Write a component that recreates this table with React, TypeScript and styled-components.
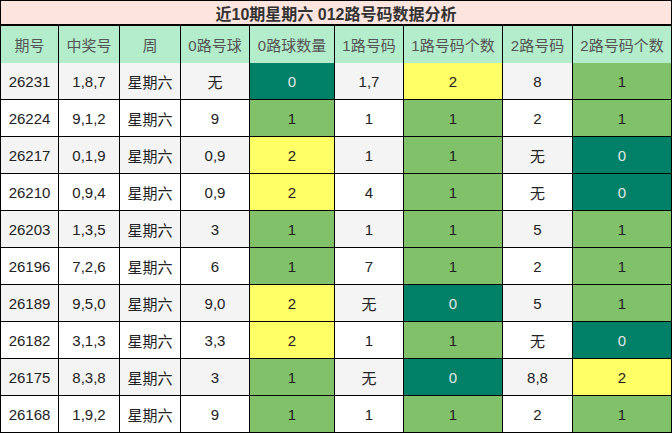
import React from "react";
import styled, { createGlobalStyle } from "styled-components";

const Global = createGlobalStyle`
  html, body { margin: 0; padding: 0; background: #fff; }
  body { font-family: "Liberation Sans", "Noto Sans CJK SC", sans-serif; }
`;

const Frame = styled.div`
  width: 672px;
  box-sizing: border-box;
  background: #000;
  padding: 1px;
  display: flex;
  flex-direction: column;
  gap: 2px;
`;

const Title = styled.div`
  height: 23px;
  background: #fde5df;
  color: #333;
  font-weight: bold;
  font-size: 16px;
  display: flex;
  align-items: center;
  justify-content: center;
  font-family: "Liberation Sans", "Noto Sans CJK SC", sans-serif;
`;

const Grid = styled.div`
  display: grid;
  grid-template-columns: 57px 60px 60px 68px 84px 68px 98px 69px 98px;
  grid-auto-rows: 36px;
  gap: 1px;
`;

const HeadCell = styled.div`
  height: 37px;
  background: #b3edcb;
  color: #555;
  font-size: 15px;
  display: flex;
  align-items: center;
  justify-content: center;
  white-space: nowrap;
`;

type Tone = "plain" | "dark" | "green" | "yellow";

const toneBg: Record<Tone, string> = {
  plain: "transparent",
  dark: "#008066",
  green: "#80c169",
  yellow: "#ffff66",
};

const Cell = styled.div<{ $tone: Tone; $alt: boolean }>`
  background: ${(p) => (p.$tone === "plain" ? (p.$alt ? "#f4f4f4" : "#ffffff") : toneBg[p.$tone])};
  color: ${(p) => (p.$tone === "dark" ? "#e6e6e6" : "#222")};
  font-size: 15px;
  display: flex;
  align-items: center;
  justify-content: center;
  white-space: nowrap;
`;

const headers = ["期号", "中奖号", "周", "0路号球", "0路球数量", "1路号码", "1路号码个数", "2路号码", "2路号码个数"];

const rows: [string, string, string, string, number, string, number, string, number][] = [
  ["26231", "1,8,7", "星期六", "无", 0, "1,7", 2, "8", 1],
  ["26224", "9,1,2", "星期六", "9", 1, "1", 1, "2", 1],
  ["26217", "0,1,9", "星期六", "0,9", 2, "1", 1, "无", 0],
  ["26210", "0,9,4", "星期六", "0,9", 2, "4", 1, "无", 0],
  ["26203", "1,3,5", "星期六", "3", 1, "1", 1, "5", 1],
  ["26196", "7,2,6", "星期六", "6", 1, "7", 1, "2", 1],
  ["26189", "9,5,0", "星期六", "9,0", 2, "无", 0, "5", 1],
  ["26182", "3,1,3", "星期六", "3,3", 2, "1", 1, "无", 0],
  ["26175", "8,3,8", "星期六", "3", 1, "无", 0, "8,8", 2],
  ["26168", "1,9,2", "星期六", "9", 1, "1", 1, "2", 1],
];

const countTone = (n: number): Tone => (n === 0 ? "dark" : n === 1 ? "green" : "yellow");

export default function App() {
  return (
    <>
      <Global />
      <Frame>
        <Title>近10期星期六 012路号码数据分析</Title>
        <Grid>
          {headers.map((h) => (
            <HeadCell key={h}>{h}</HeadCell>
          ))}
          {rows.map((r, i) => {
            const alt = i % 2 === 0;
            return (
              <React.Fragment key={r[0]}>
                <Cell $tone="plain" $alt={alt}>{r[0]}</Cell>
                <Cell $tone="plain" $alt={alt}>{r[1]}</Cell>
                <Cell $tone="plain" $alt={alt}>{r[2]}</Cell>
                <Cell $tone="plain" $alt={alt}>{r[3]}</Cell>
                <Cell $tone={countTone(r[4])} $alt={alt}>{r[4]}</Cell>
                <Cell $tone="plain" $alt={alt}>{r[5]}</Cell>
                <Cell $tone={countTone(r[6])} $alt={alt}>{r[6]}</Cell>
                <Cell $tone="plain" $alt={alt}>{r[7]}</Cell>
                <Cell $tone={countTone(r[8])} $alt={alt}>{r[8]}</Cell>
              </React.Fragment>
            );
          })}
        </Grid>
      </Frame>
    </>
  );
}
